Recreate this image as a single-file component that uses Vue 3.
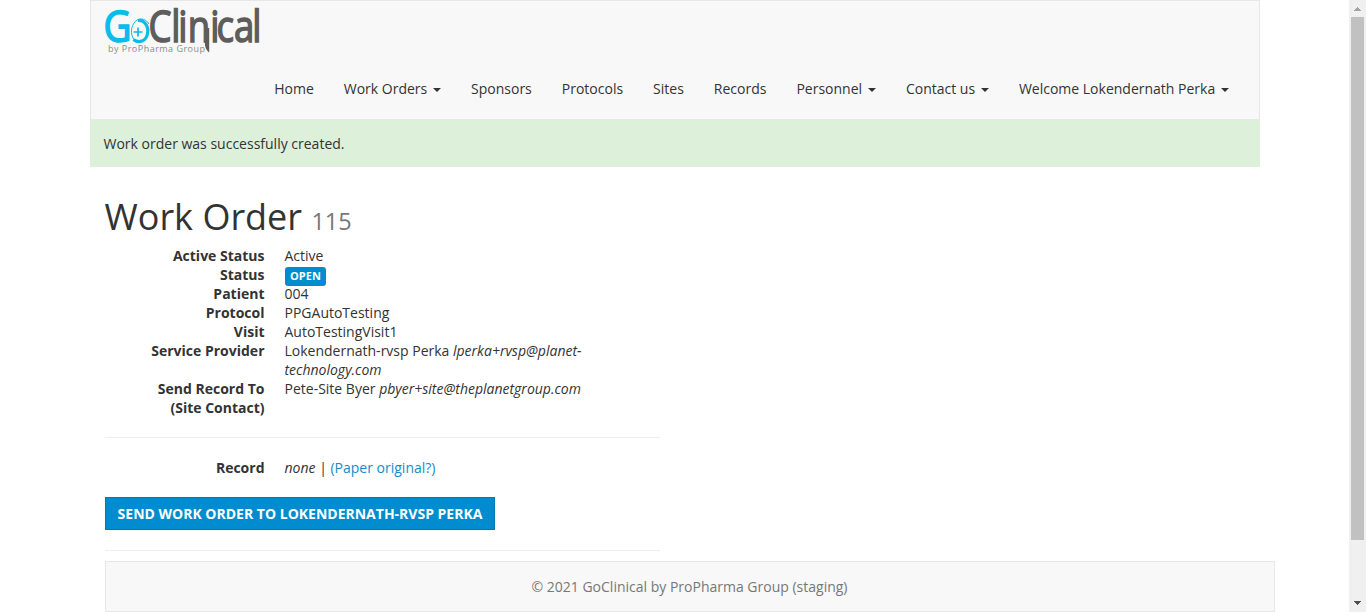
<script setup>
const nav = [
  { label: 'Home' },
  { label: 'Work Orders', menu: true },
  { label: 'Sponsors' },
  { label: 'Protocols' },
  { label: 'Sites' },
  { label: 'Records' },
  { label: 'Personnel', menu: true },
  { label: 'Contact us', menu: true },
  { label: 'Welcome Lokendernath Perka', menu: true },
]
</script>

<template>
  <div class="window">
    <div class="page">
      <header class="navbar">
        <a class="brand">
          <svg width="160" height="50" viewBox="105 5 160 50" role="img" aria-label="GoClinical by ProPharma Group">
            <text class="logo-g" x="103.5" y="42" textLength="28" lengthAdjust="spacingAndGlyphs">G</text>
            <path class="swirl" d="M133.500 39.500C139 44 146 41 147.500 34C149 27 145 20 138 20.500" />
            <path class="swirl-thin" d="M149 24C145 17 137 18 134 23C130 29 131 37 135 40.500" />
            <path class="plus" d="M138 27.500v9M133.500 32h9" />
            <g transform="translate(148.5 42) scale(.85 1)">
              <text class="logo-c" x="0 26.7 34.9 46.2 72.600 80 100.600 122" y="0">Clinical</text>
            </g>
            <path class="tail" d="M205 28h4.200V52.500Q205.500 50 205 45z" />
            <text class="logo-by" x="108" y="51.500" textLength="97" lengthAdjust="spacing">by ProPharma Group</text>
          </svg>
        </a>
        <nav class="menu">
          <a v-for="item in nav" :key="item.label">{{ item.label }}<i v-if="item.menu" class="caret"></i></a>
        </nav>
      </header>
      <div class="alert">Work order was successfully created.</div>
      <main>
        <h1>Work Order <small>115</small></h1>
        <dl>
          <dt>Active Status</dt><dd>Active</dd>
          <dt>Status</dt><dd><span class="label">OPEN</span></dd>
          <dt>Patient</dt><dd>004</dd>
          <dt>Protocol</dt><dd>PPGAutoTesting</dd>
          <dt>Visit</dt><dd>AutoTestingVisit1</dd>
          <dt>Service Provider</dt><dd>Lokendernath-rvsp Perka <em>lperka+rvsp@planet-<br>technology.com</em></dd>
          <dt>Send Record To<br>(Site Contact)</dt><dd>Pete-Site Byer <em>pbyer+site@theplanetgroup.com</em></dd>
        </dl>
        <hr>
        <dl>
          <dt>Record</dt><dd><em>none</em> | <a>(Paper original?)</a></dd>
        </dl>
        <button>SEND WORK ORDER TO LOKENDERNATH-RVSP PERKA</button>
        <hr class="last">
      </main>
      <footer>© 2021 GoClinical by ProPharma Group (staging)</footer>
    </div>
    <div class="scrollbar">
      <svg width="17" height="17" shape-rendering="crispEdges"><path d="M8 7h1v1h1v1h1v1h1v1H5v-1h1V9h1V8h1z" fill="#a3a3a3" /></svg>
      <div class="thumb"></div>
      <svg width="17" height="17" shape-rendering="crispEdges"><path d="M5 6h7v1h-1v1h-1v1H9v1H8V9H7V8H6V7H5z" fill="#505050" /></svg>
    </div>
  </div>
</template>

<style>
body { background: #fff; overflow: hidden; }
</style>

<style scoped>
* { box-sizing: border-box; }
.window {
  display: flex;
  height: 612px;
  overflow: hidden;
  color: #333;
  font: 14px/19px "Open Sans", sans-serif;
}
.page { width: 1185px; margin-left: 90px; flex: none; }
.navbar {
  width: 1170px;
  height: 119px;
  border: 1px solid #e7e7e7;
  border-bottom: 0;
  background: #f8f8f8;
}
.brand { display: block; height: 62px; padding: 4px 0 0 14px; }
.brand svg { display: block; overflow: visible; }
.logo-g, .logo-c { font: 400 43px "Open Sans", sans-serif; stroke-width: 1.5px; }
.logo-g { fill: #0bbbe8; stroke: #0bbbe8; }
.logo-c { fill: #5d5d5b; stroke: #5d5d5b; }
.logo-by { fill: #8c8c8c; font: 9px "Open Sans", sans-serif; }
.swirl, .swirl-thin, .plus { fill: none; stroke: #0bbbe8; }
.swirl { stroke-width: 3.2px; }
.swirl-thin { stroke-width: 1px; }
.plus { stroke-width: 1.7px; }
.tail { fill: #5d5d5b; }
.menu { display: flex; justify-content: flex-end; padding-right: 15px; }
.menu a { display: flex; align-items: center; padding: 16px 15px; }
.caret {
  margin-left: 5.8px;
  margin-top: 2px;
  border-top: 4px solid #333;
  border-left: 4px solid transparent;
  border-right: 4px solid transparent;
}
.alert { width: 1170px; height: 48px; padding: 15px 13.5px; background: #dcf0da; }
main { margin-left: 15px; width: 555px; }
h1 { margin: 30px 0 5px -.5px; font-size: 36px; font-weight: 400; line-height: 40px; }
small { color: #777; font-size: 23.5px; }
dl { display: grid; grid-template-columns: 159.5px 1fr; column-gap: 20px; margin: 0; }
dt { font-weight: 700; text-align: right; }
dd { margin: 0; white-space: nowrap; }
.label {
  display: block;
  width: 41px;
  height: 19px;
  margin: 2px 0 -2px .5px;
  border-radius: 3px;
  background: #008cce;
  color: #fff;
  font-size: 11px;
  font-weight: 700;
  line-height: 18px;
  text-align: center;
}
hr { height: 1px; margin: 20px 0 20px; border: 0; background: #eee; }
dd a { color: #158cca; }
button {
  display: block;
  width: 390px;
  height: 33px;
  margin-top: 20px;
  padding: 0;
  border: 1px solid #007ab3;
  background: #008cce;
  color: #fff;
  font: 700 14px/19px "Open Sans", sans-serif;
}
hr.last { margin: 20px 0 10px; }
footer {
  width: 1170px;
  height: 51px;
  margin-left: 15px;
  padding: 15px 1px 15px 0;
  border: 1px solid #e7e7e7;
  background: #f8f8f8;
  color: #777;
  text-align: center;
}
.scrollbar { display: flex; flex-direction: column; width: 17px; margin-left: auto; background: #f0f0f0; }
.scrollbar svg { display: block; }
.thumb { width: 13px; height: 523px; margin: 0 auto auto 2px; background: #c1c1c1; }
</style>
